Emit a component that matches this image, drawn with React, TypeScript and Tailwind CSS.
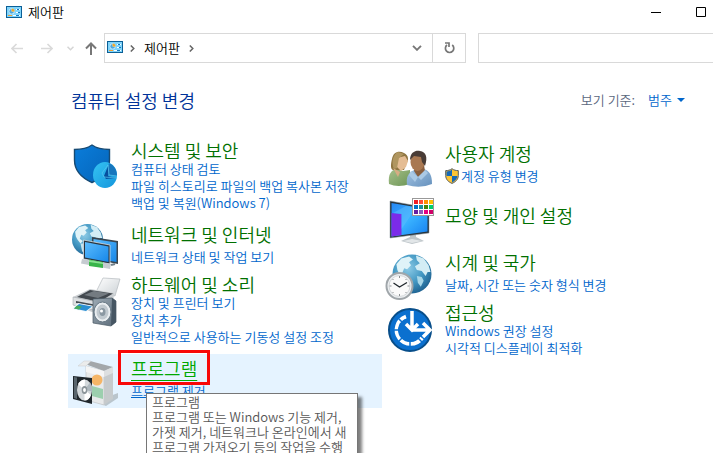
import React from 'react';

type Category = {
  title: string;
  links: string[];
  icon: React.ReactNode;
  className: string;
  tight?: boolean;
  shield?: boolean;
  active?: boolean;
};

const iconClass = 'w-12 h-10 shrink-0 self-start overflow-visible';

function PanelIcon() {
  return (
    <svg className="w-4 h-3 shrink-0" viewBox="0 0 16 12" aria-hidden="true">
      <rect x="0.5" y="0.5" width="15" height="11" fill="#7fd4fb" stroke="#0b5f96" />
      <circle cx="5.6" cy="5.4" r="2.8" fill="#f7fbff" />
      <path d="M5.6 5.4V3A2.400 2.400 0 1 0 8 5.400Z" fill="#4aa8e0" />
      <path d="M5.6 5.4V2.4A3 3 0 0 1 8.6 5.4Z" fill="#f5a623" />
      <path d="M10 3.500h4M10 6.500h4" stroke="#fff" />
      <path d="M11 3.500h2M12 6.500h2" stroke="#1676bd" />
      <path d="M2 9.5h4" stroke="#f0a030" />
      <path d="M7 9.5h7" stroke="#fff" />
      <path d="M10 9.5h3" stroke="#1676bd" />
    </svg>
  );
}

function SecurityIcon() {
  return (
    <svg className={iconClass} viewBox="0 0 48 40" aria-hidden="true">
      <defs>
        <linearGradient id="secShield" x1="0" y1="0" x2="1" y2="1">
          <stop offset="0" stopColor="#0a7ddb" />
          <stop offset="1" stopColor="#0564b8" />
        </linearGradient>
        <linearGradient id="secPie" x1="0" y1="0" x2="1" y2="1">
          <stop offset="0" stopColor="#35c3f3" />
          <stop offset="1" stopColor="#1495dc" />
        </linearGradient>
      </defs>
      <path d="M20 5C15 8.500 9 9.500 2.500 9.500V20C2.500 31 10 38 20 42.500C30 38 37.500 31 37.500 20V9.500C31 9.500 25 8.500 20 5Z" fill="url(#secShield)" stroke="#174a73" strokeWidth="1.400" />
      <ellipse cx="33" cy="35" rx="12" ry="13" fill="url(#secPie)" />
      <path d="M34 35L37 23C42 25 45 30 45 36Z" fill="#1876bd" />
      <path d="M32 36L36 26L36 36L44 38L34 39Z" fill="#064f9e" />
      <path d="M32 37L30 33L36 25M32 37L45 38M36 25L37 35L45 36" fill="none" stroke="#59c9ef" strokeWidth="0.700" />
    </svg>
  );
}

function Globe({ cx, cy, r }: { cx: number; cy: number; r: number }) {
  return (
    <g transform={`translate(${cx} ${cy}) scale(${r / 20})`}>
      <defs>
        <radialGradient id="globeSea" cx="0.4" cy="0.35" r="0.7">
          <stop offset="0" stopColor="#8dcbe6" />
          <stop offset="0.55" stopColor="#4398c3" />
          <stop offset="1" stopColor="#1c5f8e" />
        </radialGradient>
      </defs>
      <circle r="20" fill="url(#globeSea)" />
      <path d="M-16 -10L-11 -16L-3 -18L1 -15L-3 -12L-1 -9L-5 -5L-8 -6L-10 -1L-6 2L-9 5L-13 0L-15 -4Z" fill="#dff3f8" />
      <path d="M-9 5L-3 5L1 9L-2 13L-4 18L-7 15Z" fill="#c2e4ef" />
      <path d="M4 -19L12 -16L17 -9L19 -2L16 -2L14 2L10 -3L5 -4L3 -8L8 -11L5 -14Z" fill="#d3edf5" />
      <path d="M5 2L10 3L12 7L9 13L6 9Z" fill="#a8d7e8" />
    </g>
  );
}

function NetworkIcon() {
  return (
    <svg className={iconClass} viewBox="0 0 48 40" aria-hidden="true">
      <defs>
        <linearGradient id="netScreen" x1="0" y1="0" x2="1" y2="1">
          <stop offset="0" stopColor="#5bbcff" />
          <stop offset="1" stopColor="#1687e8" />
        </linearGradient>
      </defs>
      <Globe cx={15.5} cy={15.5} r={15.5} />
      <path d="M20 13L46 17V40L20 35Z" fill="#3a4650" />
      <path d="M21.500 15L44.500 18.500V38L21.500 34Z" fill="url(#netScreen)" />
      <path d="M11.500 16L38 21V40L11.500 35Z" fill="#293540" stroke="#d4dde3" strokeWidth="0.800" />
      <path d="M13 18L36.500 22.500V38L13 33.500Z" fill="url(#netScreen)" />
      <path d="M10 35L39 40L38 45L9 39.500Z" fill="#c5cbd0" />
      <path d="M17 35.500L31 38V44L17 42Z" fill="#39b54a" />
      <path d="M17 36L31 38.500V40L17 38Z" fill="#8ce493" />
      <path d="M39 41L43 40" stroke="#72818b" strokeWidth="2" />
    </svg>
  );
}

function HardwareIcon() {
  return (
    <svg className={iconClass} viewBox="0 0 48 40" aria-hidden="true">
      <defs>
        <linearGradient id="hwPaper" x1="0" y1="0" x2="1" y2="1">
          <stop offset="0" stopColor="#ffffff" />
          <stop offset="1" stopColor="#cbd1d5" />
        </linearGradient>
        <linearGradient id="hwSpeaker" x1="0" y1="0" x2="1" y2="1">
          <stop offset="0" stopColor="#9daab4" />
          <stop offset="1" stopColor="#5b6b79" />
        </linearGradient>
      </defs>
      <path d="M24 18L31 4L48 5L43 22Z" fill="url(#hwPaper)" stroke="#b4babe" strokeWidth="0.700" />
      <path d="M1 23L18 15L42 19L41 30L20 38L1 31Z" fill="#c9cdd0" />
      <path d="M5 23L18 16L41 19.500L27 28Z" fill="#42484e" />
      <path d="M12 21L22 17L37 19.500L26 24Z" fill="#747b81" />
      <path d="M1 23L26 28V37L1 31Z" fill="#dde0e2" stroke="#9ba1a6" strokeWidth="0.500" />
      <path d="M4 27L25 31V33L4 29Z" fill="#444b51" />
      <path d="M6 29L22 32L14 38L0 35Z" fill="#f2f8fc" />
      <path d="M7 30L20 32.500L14 37L2 34.500Z" fill="#2c8fd2" />
      <path d="M5 31.500L10 32.500L7 35.500L2 34.500Z" fill="#48ad5e" />
      <path d="M21 25L40 24L44 27V48L39 52L21 49Z" fill="url(#hwSpeaker)" stroke="#485763" strokeWidth="0.700" />
      <path d="M40 24L44 27V48L39 52Z" fill="#465663" />
      <ellipse cx="30.500" cy="38" rx="8.500" ry="10" fill="#e9edf0" stroke="#697985" />
      <ellipse cx="30.500" cy="38" rx="6" ry="7.500" fill="#c1c9cf" />
      <ellipse cx="30.500" cy="38" rx="3" ry="4" fill="#8b98a2" />
      <circle cx="29.500" cy="37" r="1.500" fill="#fff" />
    </svg>
  );
}

function ProgramsIcon() {
  return (
    <svg className={iconClass} viewBox="0 0 48 40" aria-hidden="true">
      <path d="M24 44L38 38L46 35V40L34 48Z" fill="#bac5cc" />
      <path d="M14 8L32 13V47L14 42Z" fill="#e8eaeb" stroke="#c1c4c6" strokeWidth="0.700" />
      <path d="M32 13L41 9V41L32 47Z" fill="#c6cacc" />
      <path d="M13 6L18 3L41 9L32 13Z" fill="#a3a7aa" />
      <path d="M6 8L12 3L19 3L14 8Z" fill="#ebecec" stroke="#c9cbcc" strokeWidth="0.500" />
      <path d="M14 8L32 13V19L14 14Z" fill="#f5f5f5" />
      <path d="M32 13L41 9V15L32 19Z" fill="#dddfe0" />
      <circle cx="25" cy="22" r="5.500" fill="#f5b566" />
      <path d="M20 28L31 31V41L20 38Z" fill="#9ccfae" />
      <path d="M1 18L20 20V46L1 41Z" fill="#20272c" />
      <path d="M2 19L5 19.500V41L2 40Z" fill="#59656d" />
      <ellipse cx="12.500" cy="32" rx="7.500" ry="10.500" fill="#d4d9dc" />
      <path d="M12.500 32L6 26Q9 21.500 13 21.500ZM12.500 32L19 37Q17 42.500 12.500 42.500Z" fill="#fff" />
      <path d="M12.500 32L18 24.500Q21 28 20 33.500Z" fill="#aeb8be" />
      <ellipse cx="12.500" cy="32" rx="2.800" ry="4" fill="#8b9499" />
      <ellipse cx="12.500" cy="32" rx="1.400" ry="2" fill="#fff" />
    </svg>
  );
}

function UsersIcon() {
  return (
    <svg className={iconClass} viewBox="0 0 48 40" aria-hidden="true">
      <defs>
        <linearGradient id="usrGreen" x1="0" y1="0" x2="1" y2="1">
          <stop offset="0" stopColor="#a6c08b" />
          <stop offset="1" stopColor="#6d9656" />
        </linearGradient>
        <linearGradient id="usrBlue" x1="0" y1="0" x2="1" y2="1">
          <stop offset="0" stopColor="#a4c4e3" />
          <stop offset="1" stopColor="#6591bd" />
        </linearGradient>
      </defs>
      <path d="M3 41C2 31 5 27 11 26L17 28L24 27V41Q12 45 3 41Z" fill="url(#usrGreen)" />
      <path d="M7 27C4 26 5 20 6 16C7 9 13 7 18 10C23 12 23 18 20 21L18 27Z" fill="#8f7541" />
      <path d="M11 15L19 13L22 18L20 24L15 28L11 24Z" fill="#e5bd94" />
      <path d="M7 25L14 29L12 34Z" fill="#d7ac83" />
      <path d="M8 26C5 20 7 11 12 9L18 11L13 15L11 25Z" fill="#b09660" />
      <path d="M21 42C20 34 22 30 28 27L38 26C43 28 46 31 46 41Q34 46 21 42Z" fill="url(#usrBlue)" />
      <path d="M29 23L38 22L39 28L32 34L28 28Z" fill="#895f3f" />
      <path d="M25 28L32 34L29 39L23 32ZM39 27L32 34L35 37L42 30Z" fill="#aac9e5" />
      <ellipse cx="31.500" cy="19" rx="7" ry="9" fill="#a97851" />
      <path d="M24 17C24 9 30 7 34 8C40 9 42 14 39 23L36 19L35 14L28 13Z" fill="#493c36" />
    </svg>
  );
}

const swatches = ['#f01c24', '#ff4b38', '#ff9000', '#ffbf00', '#0072c9', '#1a91a0', '#45820c', '#00cf6a', '#6820a0', '#8b5bbb', '#e50080', '#d00068'];

function AppearanceIcon() {
  return (
    <svg className={iconClass} viewBox="0 0 48 40" aria-hidden="true">
      <defs>
        <linearGradient id="appScreen" x1="0" y1="0" x2="1" y2="1">
          <stop offset="0" stopColor="#2687f5" />
          <stop offset="0.5" stopColor="#39b2ff" />
          <stop offset="1" stopColor="#157ff0" />
        </linearGradient>
      </defs>
      <path d="M15 46L24 42V36H30V42L38 46L26 49Z" fill="#bec5c9" />
      <path d="M17 46L26 44L36 46L26 48Z" fill="#e2e6e8" />
      <path d="M4 6L43 13V38L4 43Z" fill="#26323b" stroke="#8a969e" strokeWidth="0.500" />
      <path d="M5.500 8L41.500 14V36.500L5.500 41.500Z" fill="url(#appScreen)" />
      <path d="M5.500 18L15.500 19V40L5.500 41.500Z" fill="#7b2be8" />
      <path d="M15.500 34L30 13L20 11L7 18L15.500 19Z" fill="#66c2ff" opacity="0.45" />
      <rect x="26.500" y="3.500" width="21" height="17" fill="#fff" stroke="#999" />
      {swatches.map((color, i) => (
        <rect key={color} x={28 + (i % 4) * 5} y={5 + Math.floor(i / 4) * 5} width="4" height="4" fill={color} />
      ))}
    </svg>
  );
}

function ClockIcon() {
  return (
    <svg className={iconClass} viewBox="0 0 48 40" aria-hidden="true">
      <Globe cx={26} cy={22} r={19.5} />
      <circle cx="13.500" cy="34" r="13" fill="#eef1f3" stroke="#a0a6aa" strokeWidth="2" />
      <circle cx="13.500" cy="34" r="10.500" fill="#fafafa" stroke="#d3d7da" />
      <path d="M13.500 24v2M13.500 42v2M3.500 34h2M21.500 34h2M6.500 27l1 1M20.500 27l-1 1M6.500 41l1-1M20.500 41l-1-1" stroke="#8b8f92" />
      <path d="M7.500 31L13.500 35L21 30.500" fill="none" stroke="#20272c" strokeWidth="1.300" />
    </svg>
  );
}

function AccessIcon() {
  return (
    <svg className={iconClass} viewBox="0 0 48 40" aria-hidden="true">
      <circle cx="24" cy="28" r="21" fill="#0b70cf" stroke="#084e8a" strokeWidth="2" />
      <path d="M20 14.600A14 14 0 1 0 36 36" fill="none" stroke="#fff" strokeWidth="4" />
      <path d="M24 28V46M24 28L11 41M24 28H6M24 28L11 15M24 28L37 41" stroke="#0b70cf" strokeWidth="1.500" />
      <circle cx="24" cy="28" r="12" fill="#0b70cf" />
      <path d="M26 9V28M20 22L26 28L32 22" fill="none" stroke="#fff" strokeWidth="3.500" />
      <path d="M26 28H43M37 21L44 28L37 35" fill="none" stroke="#fff" strokeWidth="3.500" />
    </svg>
  );
}

function UacShield() {
  return (
    <svg className="w-[14px] h-4 shrink-0" viewBox="0 0 14 16" aria-hidden="true">
      <path d="M7 0.700C5 2.200 3 2.600 0.700 2.600V7.500C0.700 11.500 3.500 14 7 15.400C10.500 14 13.300 11.500 13.300 7.500V2.600C11 2.600 9 2.200 7 0.700Z" fill="#fcc434" stroke="#565c61" />
      <path d="M7 1.500C5.200 3 3.500 3.300 1.500 3.400V8H7Z" fill="#1769b7" />
      <path d="M12.500 8H7V14.500C10 13 12.200 11 12.500 8Z" fill="#1769b7" />
    </svg>
  );
}

const leftCategories: Category[] = [
  {
    title: '시스템 및 보안',
    links: ['컴퓨터 상태 검토', '파일 히스토리로 파일의 백업 복사본 저장', '백업 및 복원(Windows 7)'],
    icon: <SecurityIcon />,
    className: 'pb-2',
    tight: true,
  },
  { title: '네트워크 및 인터넷', links: ['네트워크 상태 및 작업 보기'], icon: <NetworkIcon />, className: 'pb-1' },
  {
    title: '하드웨어 및 소리',
    links: ['장치 및 프린터 보기', '장치 추가', '일반적으로 사용하는 기동성 설정 조정'],
    icon: <HardwareIcon />,
    className: 'pb-2',
    tight: true,
  },
  { title: '프로그램', links: ['프로그램 제거'], icon: <ProgramsIcon />, className: 'pb-2 bg-[#e5f3ff]', active: true },
];

const rightCategories: Category[] = [
  { title: '사용자 계정', links: ['계정 유형 변경'], icon: <UsersIcon />, className: 'pb-1.5', shield: true },
  { title: '모양 및 개인 설정', links: [], icon: <AppearanceIcon />, className: 'min-h-[57px] items-center pb-2' },
  { title: '시계 및 국가', links: ['날짜, 시간 또는 숫자 형식 변경'], icon: <ClockIcon />, className: 'pb-1' },
  { title: '접근성', links: ['Windows 권장 설정', '시각적 디스플레이 최적화'], icon: <AccessIcon />, className: 'pb-2', tight: true },
];

function CategoryItem({ title, links, icon, className, tight, shield, active }: Category) {
  return (
    <li className={`relative flex gap-[11px] pl-1 pt-1 ${className}`}>
      {icon}
      <div className="pb-px whitespace-nowrap">
        <h2 className="text-lg leading-5">
          <a href="#" className={active ? 'text-[#00a800] underline decoration-1 underline-offset-4' : 'text-[#007000]'}>
            {title}
          </a>
        </h2>
        <ul className={tight ? '' : 'pt-1'}>
          {links.map((link) => (
            <li key={link} className="flex items-center gap-[2px] leading-[17px]">
              {shield && <UacShield />}
              <a href="#" className={active ? 'text-[#0066cc] underline' : 'text-[#0066cc]'}>{link}</a>
            </li>
          ))}
        </ul>
      </div>
      {active && (
        <>
          <div role="tooltip" className="absolute left-[78px] top-[39px] w-[212px] border border-[#767676] bg-white px-[5px] pb-6 leading-[15px] text-[#575757] whitespace-nowrap shadow-[4px_4px_3px_rgba(0,0,0,0.5)]">
            <p>프로그램</p>
            <p>프로그램 또는 Windows 기능 제거,</p>
            <p>가젯 제거, 네트워크나 온라인에서 새</p>
            <p>프로그램 가져오기 등의 작업을 수행</p>
          </div>
          <div className="absolute left-[50px] -top-1 w-[92px] h-[35px] border-3 border-[#f80808] pointer-events-none" />
        </>
      )}
    </li>
  );
}

function TitleBar() {
  return (
    <header className="flex items-center h-6 pl-[6px]">
      <PanelIcon />
      <h1 className="pl-[6px] pb-0.5 text-black">제어판</h1>
      <div className="ml-auto flex items-center gap-[34px] pr-[6px]">
        <button aria-label="최소화">
          <svg className="w-[11px] h-[11px]" viewBox="0 0 11 11"><path d="M0 5.500h10" stroke="#000" /></svg>
        </button>
        <button aria-label="최대화">
          <svg className="w-[11px] h-[11px]" viewBox="0 0 11 11"><path d="M0.500 0.500h9v9h-9z" fill="none" stroke="#000" /></svg>
        </button>
      </div>
    </header>
  );
}

function Chevron() {
  return (
    <svg className="w-[5px] h-[7px] shrink-0" viewBox="0 0 5 7" aria-hidden="true">
      <path d="M0.800 0.500L3.800 3.500L0.800 6.500" fill="none" stroke="#666" strokeWidth="1.500" />
    </svg>
  );
}

function NavBar() {
  return (
    <nav className="flex items-center mt-[9px] pl-[11px] h-[30px]">
      <button aria-label="뒤로">
        <svg className="w-3 h-[11px]" viewBox="0 0 12 11"><path d="M12 5.500H1M5.500 1L1 5.500L5.500 10" fill="none" stroke="#dadada" strokeWidth="1.600" /></svg>
      </button>
      <button aria-label="앞으로" className="ml-[18px]">
        <svg className="w-3 h-[11px]" viewBox="0 0 12 11"><path d="M0 5.500H11M6.500 1L11 5.500L6.500 10" fill="none" stroke="#dadada" strokeWidth="1.600" /></svg>
      </button>
      <button aria-label="최근 위치" className="ml-[14px]">
        <svg className="w-[7px] h-[5px]" viewBox="0 0 7 5"><path d="M0.500 0.700L3.500 3.700L6.500 0.700" fill="none" stroke="#d5d5d5" strokeWidth="1.500" /></svg>
      </button>
      <button aria-label="위로" className="ml-[11px]">
        <svg className="w-3 h-[13px]" viewBox="0 0 12 13"><path d="M6 13V1.500M1 6.500L6 1.500L11 6.500" fill="none" stroke="#777" strokeWidth="2" /></svg>
      </button>
      <div className="ml-[7px] flex h-full w-[362px] items-center border border-[#d9d9d9]">
        <span className="pl-[2px] pb-0.5"><PanelIcon /></span>
        <span className="pl-[7px] pr-[9px]"><Chevron /></span>
        <a href="#" className="pb-0.5 text-black">제어판</a>
        <span className="pl-[9px]"><Chevron /></span>
        <button aria-label="이전 위치" className="ml-auto mr-[10px]">
          <svg className="w-[10px] h-[6px]" viewBox="0 0 10 6"><path d="M1 0.800L5 4.800L9 0.800" fill="none" stroke="#777" strokeWidth="1.900" /></svg>
        </button>
        <button aria-label="새로 고침" className="flex h-full w-[33px] items-center justify-center border-l border-[#d9d9d9]">
          <svg className="w-[11px] h-3" viewBox="0 0 11 12">
            <path d="M8.200 3A4.200 4.200 0 1 1 3 3" fill="none" stroke="#777" strokeWidth="1.700" />
            <path d="M1 1H5V5" fill="none" stroke="#777" strokeWidth="1.700" />
          </svg>
        </button>
      </div>
      <input type="search" aria-label="제어판 검색" className="ml-3 h-full min-w-0 flex-1 border border-r-0 border-[#d9d9d9] px-2 outline-none" />
    </nav>
  );
}

function App() {
  return (
    <div className="h-screen overflow-hidden bg-white text-[13px] font-[350] leading-[17px] font-['Noto_Sans_CJK_KR',sans-serif]">
      <TitleBar />
      <NavBar />
      <main>
        <div className="flex h-[73px] items-center pl-[71px] pr-7">
          <h2 className="text-lg leading-5 text-[#003399]">컴퓨터 설정 변경</h2>
          <span className="ml-auto text-[#5a6780]">보기 기준:</span>
          <button className="ml-[13px] flex items-center gap-[5px] text-[#0066cc]">
            범주
            <svg className="w-2 h-1" viewBox="0 0 8 4" aria-hidden="true"><path d="M0 0H8L4 4Z" fill="#0066cc" /></svg>
          </button>
        </div>
        <div className="grid grid-cols-2 pl-[68px] pr-[17px]">
          <ul>
            {leftCategories.map((category) => <CategoryItem key={category.title} {...category} />)}
          </ul>
          <ul className="pt-[3px]">
            {rightCategories.map((category) => <CategoryItem key={category.title} {...category} />)}
          </ul>
        </div>
      </main>
    </div>
  );
}

export default App;
